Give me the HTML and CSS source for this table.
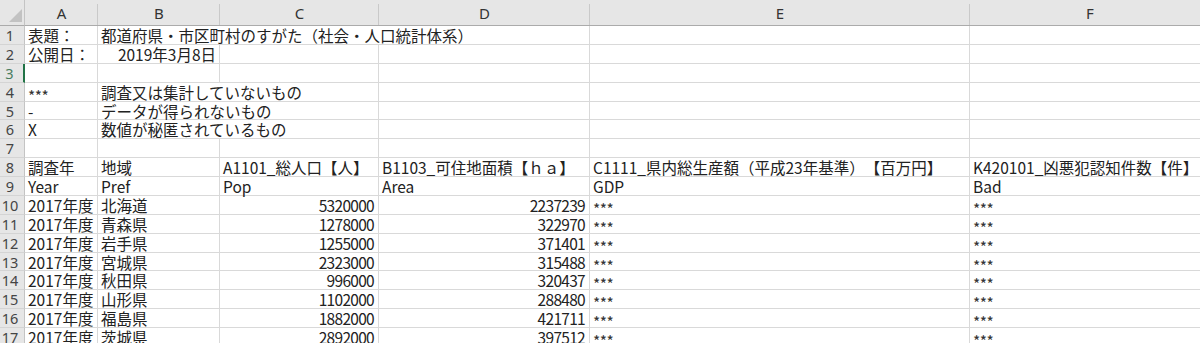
FILE: index.html
```html
<!DOCTYPE html>
<html lang="ja">
<head>
<meta charset="UTF-8">
<meta name="viewport" content="width=device-width, initial-scale=1.0">
<title>Sheet1</title>
<link rel="stylesheet" href="styles.css">
</head>
<body>
  <div class="sheet">
    <!-- column headers -->
    <div class="corner"><span class="corner-mark"></span></div>
    <div class="col-head">A</div>
    <div class="col-head">B</div>
    <div class="col-head">C</div>
    <div class="col-head">D</div>
    <div class="col-head">E</div>
    <div class="col-head">F</div>

    <!-- 1 -->
    <div class="row-head">1</div>
    <div class="cell">表題：</div>
    <div class="cell span-3">都道府県・市区町村のすがた（社会・人口統計体系）</div>
    <div class="cell"></div>
    <div class="cell"></div>

    <!-- 2 -->
    <div class="row-head">2</div>
    <div class="cell">公開日：</div>
    <div class="cell right">2019年3月8日</div>
    <div class="cell"></div>
    <div class="cell"></div>
    <div class="cell"></div>
    <div class="cell"></div>

    <!-- 3 (active row) -->
    <div class="row-head active">3</div>
    <div class="cell"></div>
    <div class="cell"></div>
    <div class="cell"></div>
    <div class="cell"></div>
    <div class="cell"></div>
    <div class="cell"></div>

    <!-- 4 -->
    <div class="row-head">4</div>
    <div class="cell"><span class="stars">***</span></div>
    <div class="cell span-2">調査又は集計していないもの</div>
    <div class="cell"></div>
    <div class="cell"></div>
    <div class="cell"></div>

    <!-- 5 -->
    <div class="row-head">5</div>
    <div class="cell">-</div>
    <div class="cell span-2">データが得られないもの</div>
    <div class="cell"></div>
    <div class="cell"></div>
    <div class="cell"></div>

    <!-- 6 -->
    <div class="row-head">6</div>
    <div class="cell">X</div>
    <div class="cell span-2">数値が秘匿されているもの</div>
    <div class="cell"></div>
    <div class="cell"></div>
    <div class="cell"></div>

    <!-- 7 -->
    <div class="row-head">7</div>
    <div class="cell"></div>
    <div class="cell"></div>
    <div class="cell"></div>
    <div class="cell"></div>
    <div class="cell"></div>
    <div class="cell"></div>

    <!-- 8: long names -->
    <div class="row-head">8</div>
    <div class="cell">調査年</div>
    <div class="cell">地域</div>
    <div class="cell">A1101_総人口【人】</div>
    <div class="cell">B1103_可住地面積【ｈａ】</div>
    <div class="cell">C1111_県内総生産額（平成23年基準）【百万円】</div>
    <div class="cell">K420101_凶悪犯認知件数【件】</div>

    <!-- 9: short names -->
    <div class="row-head">9</div>
    <div class="cell">Year</div>
    <div class="cell">Pref</div>
    <div class="cell">Pop</div>
    <div class="cell">Area</div>
    <div class="cell">GDP</div>
    <div class="cell">Bad</div>

    <!-- data -->
    <div class="row-head">10</div>
    <div class="cell">2017年度</div>
    <div class="cell">北海道</div>
    <div class="cell num">5320000</div>
    <div class="cell num">2237239</div>
    <div class="cell"><span class="stars">***</span></div>
    <div class="cell"><span class="stars">***</span></div>

    <div class="row-head">11</div>
    <div class="cell">2017年度</div>
    <div class="cell">青森県</div>
    <div class="cell num">1278000</div>
    <div class="cell num">322970</div>
    <div class="cell"><span class="stars">***</span></div>
    <div class="cell"><span class="stars">***</span></div>

    <div class="row-head">12</div>
    <div class="cell">2017年度</div>
    <div class="cell">岩手県</div>
    <div class="cell num">1255000</div>
    <div class="cell num">371401</div>
    <div class="cell"><span class="stars">***</span></div>
    <div class="cell"><span class="stars">***</span></div>

    <div class="row-head">13</div>
    <div class="cell">2017年度</div>
    <div class="cell">宮城県</div>
    <div class="cell num">2323000</div>
    <div class="cell num">315488</div>
    <div class="cell"><span class="stars">***</span></div>
    <div class="cell"><span class="stars">***</span></div>

    <div class="row-head">14</div>
    <div class="cell">2017年度</div>
    <div class="cell">秋田県</div>
    <div class="cell num">996000</div>
    <div class="cell num">320437</div>
    <div class="cell"><span class="stars">***</span></div>
    <div class="cell"><span class="stars">***</span></div>

    <div class="row-head">15</div>
    <div class="cell">2017年度</div>
    <div class="cell">山形県</div>
    <div class="cell num">1102000</div>
    <div class="cell num">288480</div>
    <div class="cell"><span class="stars">***</span></div>
    <div class="cell"><span class="stars">***</span></div>

    <div class="row-head">16</div>
    <div class="cell">2017年度</div>
    <div class="cell">福島県</div>
    <div class="cell num">1882000</div>
    <div class="cell num">421711</div>
    <div class="cell"><span class="stars">***</span></div>
    <div class="cell"><span class="stars">***</span></div>

    <div class="row-head">17</div>
    <div class="cell">2017年度</div>
    <div class="cell">茨城県</div>
    <div class="cell num">2892000</div>
    <div class="cell num">397512</div>
    <div class="cell"><span class="stars">***</span></div>
    <div class="cell"><span class="stars">***</span></div>
  </div>
</body>
</html>
```

FILE: styles.css
```css
html, body {
  margin: 0;
  padding: 0;
  background: #fff;
  overflow: hidden;
}
.sheet {
  display: grid;
  grid-template-columns: 25px 73px 122px 159px 211px 380px 240px;
  grid-template-rows: 26px;
  grid-auto-rows: 18.875px;
  width: 1210px;
  font-family: "Noto Sans CJK JP", sans-serif;
  font-size: 15.5px;
  color: #222;
  text-spacing-trim: space-all; /* keep full-width brackets at full width */
}
/* top-left select-all box */
.corner {
  background: #e6e6e6;
  border-right: 1px solid #c4c4c4;
  border-bottom: 1px solid #ababab;
  box-sizing: border-box;
  display: flex;
  align-items: flex-end;
  justify-content: flex-end;
  padding: 0 2px 3px 0;
}
.corner-mark {
  width: 0;
  height: 0;
  border-left: 13px solid transparent;
  border-bottom: 13px solid #c2c2c2;
}
.col-head {
  background: linear-gradient(#c9c9c9, #c9c9c9) right bottom / 1px 21px no-repeat, #e6e6e6;
  border-bottom: 1px solid #ababab;
  box-sizing: border-box;
  text-align: center;
  font-family: "Noto Sans", sans-serif;
  font-size: 15px;
  line-height: 26px;
  color: #333;
}
.row-head {
  background: #e6e6e6;
  border-right: 1px solid #c4c4c4;
  border-bottom: 1px solid #d4d4d4;
  box-sizing: border-box;
  text-align: center;
  padding-right: 4px;
  font-family: "Noto Sans", sans-serif;
  font-size: 14.5px;
  line-height: 18px;
  color: #444;
}
.row-head.active {
  border-right: 2px solid #217346;
  color: #4a7d5f;
}
.cell {
  border-right: 1px solid #d9d9d9;
  border-bottom: 1px solid #d9d9d9;
  box-sizing: border-box;
  padding: 0 3px;
  line-height: 18px;
  white-space: nowrap;
  overflow: visible;
}
.span-2 {
  grid-column: span 2;
}
.span-3 {
  grid-column: span 3;
}
.right {
  text-align: right;
}
.num {
  text-align: right;
  letter-spacing: -0.7px;
  padding-right: 4px;
}
/* asterisks sit mid-height in the sheet font */
.stars {
  display: inline-block;
  transform: translateY(3px);
  letter-spacing: -0.5px;
  color: #333;
}
```
